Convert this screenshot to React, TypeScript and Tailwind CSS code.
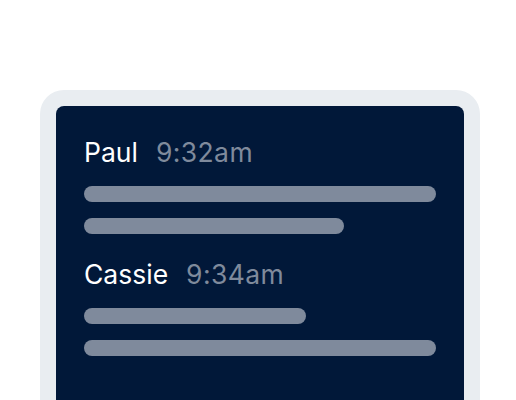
export default function App() {
  return (
    <div className="w-[516px] h-[400px] overflow-hidden bg-white" style={{ fontFamily: "Inter, 'Noto Sans', sans-serif" }}>
      <div className="ml-[40px] mt-[90px] w-[440px] h-[340px] rounded-[24px] bg-[#e9edf1] p-4">
        <div className="h-full rounded-lg bg-[#011839] px-7 pt-[30px]">
          <div className="flex items-baseline gap-[18px] text-[26.5px] leading-[32px]">
            <span className="text-white">Paul</span>
            <span className="text-[#7f8a9c] tracking-[0.4px]">9:32am</span>
          </div>
          <div className="mt-[18px] flex flex-col gap-4">
            <div className="h-4 w-full rounded-full bg-[#7f8a9c]" />
            <div className="h-4 w-[260px] rounded-full bg-[#7f8a9c]" />
          </div>
          <div className="mt-[24px] flex items-baseline gap-[18px] text-[26.5px] leading-[32px]">
            <span className="text-white">Cassie</span>
            <span className="text-[#7f8a9c] tracking-[0.4px]">9:34am</span>
          </div>
          <div className="mt-[18px] flex flex-col gap-4">
            <div className="h-4 w-[222px] rounded-full bg-[#7f8a9c]" />
            <div className="h-4 w-full rounded-full bg-[#7f8a9c]" />
          </div>
        </div>
      </div>
    </div>
  );
}
